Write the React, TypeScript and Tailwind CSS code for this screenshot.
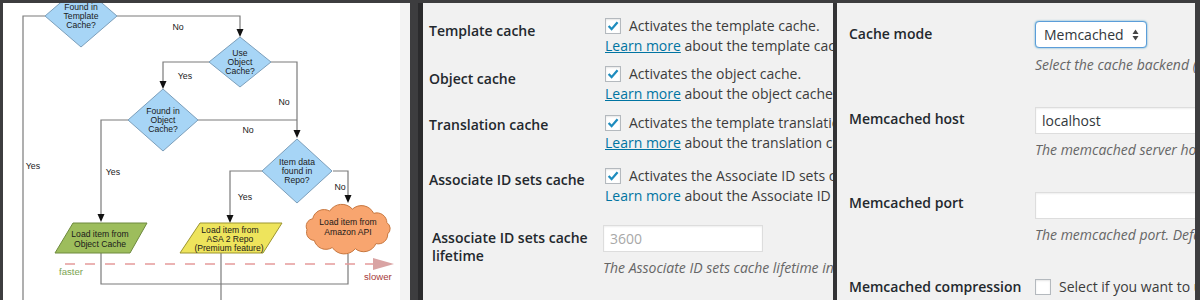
import React from 'react';

const LINE = '#7b7b7b';
const FONT = "'Liberation Sans', Arial, sans-serif";

function cloudPath(cx: number, cy: number, rx: number, ry: number, n: number) {
  const pts: [number, number][] = [];
  for (let i = 0; i <= n; i++) {
    const a = (Math.PI * 2 * i) / n + 0.25;
    pts.push([cx + rx * Math.cos(a), cy + ry * Math.sin(a)]);
  }
  let d = `M ${pts[0][0].toFixed(1)} ${pts[0][1].toFixed(1)}`;
  for (let i = 1; i <= n; i++) {
    const [x0, y0] = pts[i - 1];
    const [x1, y1] = pts[i];
    const r = Math.hypot(x1 - x0, y1 - y0) * 0.62;
    d += ` A ${r.toFixed(1)} ${r.toFixed(1)} 0 0 1 ${x1.toFixed(1)} ${y1.toFixed(1)}`;
  }
  return d + ' Z';
}

function Arrow({ x, y }: { x: number; y: number }) {
  return <polygon points={`${x - 3.5},${y - 8} ${x + 3.5},${y - 8} ${x},${y}`} fill="#111" />;
}

function T({ x, y, children, size = 8.6, fill = '#1a1a1a', anchor = 'middle' }: { x: number; y: number; children: React.ReactNode; size?: number; fill?: string; anchor?: 'middle' | 'start' }) {
  return (
    <text x={x} y={y + size * 0.35} textAnchor={anchor} fontSize={size} fontFamily={FONT} fill={fill}>
      {children}
    </text>
  );
}

function Diamond({ cx, cy, w, h, lines }: { cx: number; cy: number; w: number; h: number; lines: string[] }) {
  return (
    <g>
      <polygon
        points={`${cx},${cy - h} ${cx + w},${cy} ${cx},${cy + h} ${cx - w},${cy}`}
        fill="#a7d5f6"
        stroke="#7c9fbb"
        strokeWidth={1}
      />
      {lines.map((l, i) => (
        <T key={l} x={cx} y={cy + (i - (lines.length - 1) / 2) * 9.3}>
          {l}
        </T>
      ))}
    </g>
  );
}

function Flowchart() {
  return (
    <svg width={397} height={297} viewBox="3 3 397 297" className="block">
      <rect x={3} y={3} width={397} height={297} fill="#ffffff" />
      <g fill="none" stroke={LINE} strokeWidth={1.2}>
        <polyline points="45,16 23,16 23,300" />
        <polyline points="117,16 240,16 240,30" />
        <polyline points="210,62 163,62 163,82" />
        <polyline points="271,62 297,62 297,131" />
        <polyline points="128,120 101,120 101,215" />
        <polyline points="198,120 297,120" />
        <polyline points="262,171 230,171 230,215" />
        <polyline points="333,171 348,171 348,196" />
        <polyline points="101,253 101,284 348,284 348,254" />
        <polyline points="221,253 221,300" />
      </g>
      <Arrow x={240} y={37} />
      <Arrow x={163} y={89} />
      <Arrow x={297} y={138} />
      <Arrow x={101} y={222} />
      <Arrow x={230} y={223} />
      <Arrow x={348} y={203} />

      <Diamond cx={81} cy={16} w={36} h={31} lines={['Found in', 'Template', 'Cache?']} />
      <Diamond cx={240} cy={62} w={31} h={25} lines={['Use', 'Object', 'Cache?']} />
      <Diamond cx={163} cy={120} w={35} h={31} lines={['Found in', 'Object', 'Cache?']} />
      <Diamond cx={297} cy={171} w={35} h={32} lines={['Item data', 'found in', 'Repo?']} />

      <T x={178} y={27} size={8.8}>No</T>
      <T x={185} y={76} size={8.8}>Yes</T>
      <T x={284} y={102} size={8.8}>No</T>
      <T x={248} y={130} size={8.8}>No</T>
      <T x={33} y={166} size={8.8}>Yes</T>
      <T x={113} y={172} size={8.8}>Yes</T>
      <T x={245} y={197} size={8.8}>Yes</T>
      <T x={340} y={187} size={8.8}>No</T>

      <polygon points="73,223 147,223 130,253 55,253" fill="#9dbd5c" stroke="#6e8a3e" strokeWidth={1} />
      <T x={100} y={234}>Load item from</T>
      <T x={100} y={243.5}>Object Cache</T>

      <polygon points="200,223 282,223 263,253 180,253" fill="#eee45c" stroke="#9c9530" strokeWidth={1} />
      <T x={230} y={230}>Load item from</T>
      <T x={230} y={239}>ASA 2 Repo</T>
      <T x={229} y={248}>(Premium feature)</T>

      <path d={cloudPath(348, 229, 41, 20, 11)} fill="#f8a56f" stroke="#c7773f" strokeWidth={1} />
      <T x={348} y={222}>Load item from</T>
      <T x={348} y={232}>Amazon API</T>

      <line x1={65} y1={264} x2={373} y2={264} stroke="#e59a9a" strokeWidth={1.3} strokeDasharray="10 10" />
      <polygon points="373,258 394,264 373,270" fill="#d9a3a3" />
      <T x={59} y={272} size={9.6} fill="#7ba552" anchor="start">faster</T>
      <T x={364} y={277} size={9.6} fill="#a63b3b" anchor="start">slower</T>
    </svg>
  );
}

function Check({ checked }: { checked?: boolean }) {
  return (
    <span className="inline-flex h-4 w-4 shrink-0 items-center justify-center border border-[#b4b9be] bg-white shadow-[inset_0_1px_2px_rgba(0,0,0,0.1)]">
      {checked && (
        <svg viewBox="0 0 16 16" className="h-[14px] w-[14px]">
          <path d="M3 8 L6.4 11.6 L13.2 3.6" fill="none" stroke="#1e8cbe" strokeWidth={2.6} />
        </svg>
      )}
    </span>
  );
}

function CheckRow({ label, mt, pt, text, about, underline }: { label: string; mt: string; pt: string; text: string; about: string; underline?: boolean }) {
  return (
    <div className={`flex ${mt}`}>
      <div className={`w-[176px] shrink-0 font-semibold text-[#23282d] leading-5 ${pt}`}>{label}</div>
      <div className="leading-5 text-[#3c3c3c]">
        <div className="flex items-center gap-2">
          <Check checked />
          <span>{text}</span>
        </div>
        <div>
          <a className={`text-[#0074a2] ${underline ? 'underline' : ''}`}>Learn more</a> {about}
        </div>
      </div>
    </div>
  );
}

function TextInput({ value, w, muted }: { value?: string; w: string; muted?: boolean }) {
  return (
    <div
      className={`h-[27px] ${w} shrink-0 border border-[#dddddd] bg-white px-[6px] leading-[25px] shadow-[inset_0_1px_2px_rgba(0,0,0,0.07)] ${muted ? 'text-[#a8a8a8]' : 'text-[#32373c]'}`}
    >
      {value}
    </div>
  );
}

function CachePanel() {
  return (
    <div className="h-[297px] w-[410px] shrink-0 overflow-hidden whitespace-nowrap bg-[#f1f1f1] pl-[6px] font-['Open_Sans',sans-serif] text-[14px]">
      <CheckRow label="Template cache" mt="mt-[13px]" pt="pt-[5px]" text="Activates the template cache." about="about the template cache" underline />
      <CheckRow label="Object cache" mt="mt-[8px]" pt="pt-[5px]" text="Activates the object cache." about="about the object cache" underline />
      <CheckRow label="Translation cache" mt="mt-[9px]" pt="pt-[2px]" text="Activates the template translation cache." about="about the translation cache" underline />
      <CheckRow label="Associate ID sets cache" mt="mt-[13px]" pt="pt-[4px]" text="Activates the Associate ID sets cache." about="about the Associate ID sets cache" />
      <div className="mt-[19px] flex">
        <div className="w-[176px] shrink-0 whitespace-normal pl-[3px] pt-[4px] font-semibold leading-[18px] text-[#23282d]">
          Associate ID sets cache lifetime
        </div>
        <div className="-ml-[2px]">
          <TextInput value="3600" w="w-[160px]" muted />
          <div className="mt-[7px] italic leading-[18px] text-[#666666]">The Associate ID sets cache lifetime in seconds.</div>
        </div>
      </div>
    </div>
  );
}

function BackendPanel() {
  return (
    <div className="h-[297px] w-[358px] shrink-0 overflow-hidden whitespace-nowrap bg-[#f1f1f1] pl-[12px] font-['Open_Sans',sans-serif] text-[14px]">
      <div className="mt-[18px] flex">
        <div className="w-[186px] shrink-0 pt-[3px] font-semibold leading-5 text-[#23282d]">Cache mode</div>
        <div>
          <div className="flex h-[27px] w-[112px] items-center justify-between rounded-[4px] border border-[#5b9dd9] bg-white pl-[8px] pr-[7px] text-[#32373c] shadow-[0_0_2px_rgba(30,140,190,0.8)]">
            <span>Memcached</span>
            <svg width="7" height="12" viewBox="0 0 7 12">
              <polygon points="0.5,5 3.5,0.5 6.5,5" fill="#444" />
              <polygon points="0.5,7 3.5,11.5 6.5,7" fill="#444" />
            </svg>
          </div>
          <div className="mt-[8px] italic leading-[18px] text-[#666666]">Select the cache backend (Memcached or Redis).</div>
        </div>
      </div>
      <div className="mt-[33px] flex">
        <div className="w-[186px] shrink-0 pt-[2px] font-semibold leading-5 text-[#23282d]">Memcached host</div>
        <div>
          <TextInput value="localhost" w="w-[320px]" />
          <div className="mt-[7px] italic leading-[18px] text-[#666666]">The memcached server host. Default: localhost</div>
        </div>
      </div>
      <div className="mt-[33px] flex">
        <div className="w-[186px] shrink-0 pt-[1px] font-semibold leading-5 text-[#23282d]">Memcached port</div>
        <div>
          <TextInput w="w-[320px]" />
          <div className="mt-[7px] italic leading-[18px] text-[#666666]">The memcached port. Default: 11211</div>
        </div>
      </div>
      <div className="mt-[33px] flex">
        <div className="w-[186px] shrink-0 font-semibold leading-5 text-[#23282d]">Memcached compression</div>
        <div className="flex items-center gap-2 leading-5 text-[#3c3c3c]">
          <Check />
          <span>Select if you want to use compression.</span>
        </div>
      </div>
    </div>
  );
}

export default function App() {
  return (
    <div className="flex h-[300px] w-[1200px] overflow-hidden bg-[#3d3d3f] pt-[3px]">
      <div className="ml-[3px] flex h-[297px] shrink-0">
        <Flowchart />
        <div className="w-[10px] bg-[#f3f3f3]" />
      </div>
      <div className="ml-[8px] w-[5px] shrink-0 bg-[#2b2b2d]" />
      <CachePanel />
      <div className="w-[4px] shrink-0 bg-[#333335]" />
      <BackendPanel />
    </div>
  );
}
